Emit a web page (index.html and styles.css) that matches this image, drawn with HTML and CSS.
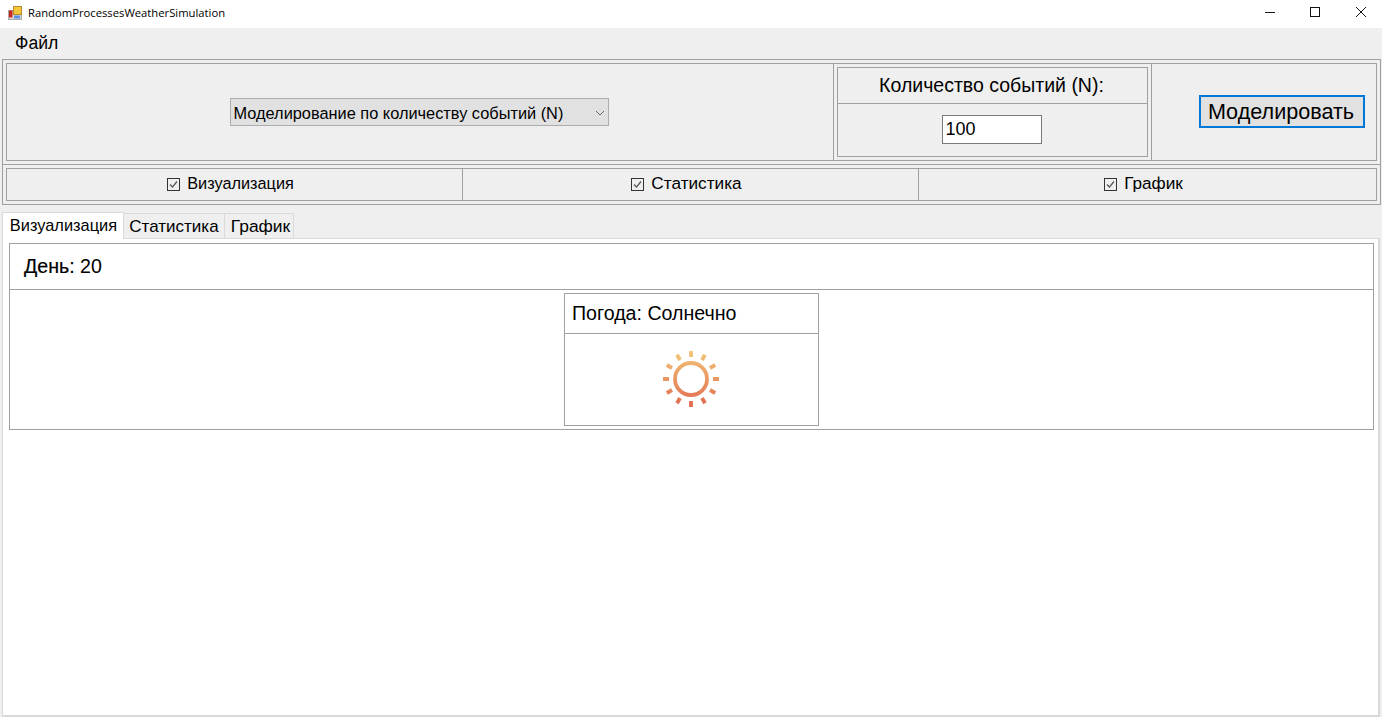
FILE: index.html
```html
<!DOCTYPE html>
<html lang="ru">
<head>
    <meta charset="UTF-8">
    <meta name="viewport" content="width=device-width, initial-scale=1.0">
    <title>RandomProcessesWeatherSimulation</title>
    <link rel="stylesheet" href="styles.css">
</head>
<body>

<div class="titlebar">
    <svg class="app-icon" width="14" height="14" viewBox="0 0 14 14">
        <rect x="0.5" y="4.5" width="13" height="9" fill="#dcdcdc" stroke="#a8a8a8"/>
        <rect x="5.5" y="0.5" width="8" height="8" fill="#f4c63c" stroke="#b98a2a"/>
        <rect x="1" y="4.5" width="3.5" height="7" fill="#c8281e"/>
        <rect x="6" y="9.5" width="6" height="3" fill="#5a90e0"/>
    </svg>
    <span class="app-title">RandomProcessesWeatherSimulation</span>
    <div class="win-buttons">
        <svg width="46" height="28" viewBox="0 0 46 28"><path d="M19 12.5h10" stroke="#111" fill="none"/></svg>
        <svg width="46" height="28" viewBox="0 0 46 28"><rect x="18.5" y="7.5" width="9" height="9" stroke="#111" fill="none"/></svg>
        <svg width="46" height="28" viewBox="0 0 46 28"><path d="M18 7l10 10M28 7l-10 10" stroke="#111" fill="none"/></svg>
    </div>
</div>

<div class="menubar"><span class="menu-item">Файл</span></div>

<div class="frame frame-top">
    <div class="cell cell-mode">
        <div class="combo">
            <span>Моделирование по количеству событий (N)</span>
            <svg width="10" height="6" viewBox="0 0 10 6"><path d="M1 1l4 4 4-4" stroke="#666" fill="none"/></svg>
        </div>
    </div>
    <div class="cell cell-count">
        <div class="count-box">
            <div class="count-label">Количество событий (N):</div>
            <div class="count-value"><input class="count-input" type="text" value="100"></div>
        </div>
    </div>
    <div class="cell cell-run">
        <button class="run-btn" type="button">Моделировать</button>
    </div>
</div>

<div class="frame frame-checks">
    <div class="cell check-cell check-first"><span class="check"><svg width="13" height="13" viewBox="0 0 13 13"><rect x="0.5" y="0.5" width="12" height="12" fill="none" stroke="#333"/><path d="M3 6.5l2.5 2.5L10 3.5" stroke="#555" fill="none" stroke-width="1.2"/></svg></span>Визуализация</div>
    <div class="cell check-cell check-second"><span class="check"><svg width="13" height="13" viewBox="0 0 13 13"><rect x="0.5" y="0.5" width="12" height="12" fill="none" stroke="#333"/><path d="M3 6.5l2.5 2.5L10 3.5" stroke="#555" fill="none" stroke-width="1.2"/></svg></span>Статистика</div>
    <div class="cell check-cell check-third"><span class="check"><svg width="13" height="13" viewBox="0 0 13 13"><rect x="0.5" y="0.5" width="12" height="12" fill="none" stroke="#333"/><path d="M3 6.5l2.5 2.5L10 3.5" stroke="#555" fill="none" stroke-width="1.2"/></svg></span>График</div>
</div>

<div class="tabs">
    <div class="tab tab-active">Визуализация</div>
    <div class="tab tab-stat">Статистика</div>
    <div class="tab tab-graph">График</div>
</div>

<div class="tab-panel">
    <div class="vis-table">
        <div class="day-row"><span class="day-label">День:</span> 20</div>
        <div class="weather-row">
            <div class="weather-box">
                <div class="weather-label">Погода: Солнечно</div>
                <div class="weather-icon">
                    <svg width="60" height="60" viewBox="0 0 60 60">
                        <defs>
                            <linearGradient id="sunGrad" gradientUnits="userSpaceOnUse" x1="0" y1="2" x2="0" y2="58">
                                <stop offset="0" stop-color="#f2c678"/>
                                <stop offset="1" stop-color="#e0694f"/>
                            </linearGradient>
                        </defs>
                        <g fill="none" stroke="url(#sunGrad)" stroke-width="3.8">
                            <circle cx="30" cy="30" r="16"/>
                            <path d="M30 2v6M30 52v6M2 30h6M52 30h6M16 5.8l3 5.2M41 49l3 5.2M5.8 16l5.2 3M49 41l5.2 3M44 5.8l-3 5.2M19 49l-3 5.2M54.2 16l-5.2 3M11 41l-5.2 3"/>
                        </g>
                    </svg>
                </div>
            </div>
        </div>
    </div>
</div>

</body>
</html>
```

FILE: styles.css
```css
html, body {
    margin: 0;
    height: 717px;
    overflow: hidden;
}
body {
    font-family: "Liberation Sans", Arial, sans-serif;
    font-size: 16px;
    color: #000;
    background-color: #efefef;
    display: flex;
    flex-direction: column;
}
.titlebar {
    height: 28px;
    background-color: #fff;
    display: flex;
    align-items: center;
    flex-shrink: 0;
}
.app-icon {
    margin-left: 8px;
    margin-top: -3px;
}
.app-title {
    margin-left: 6px;
    font-family: "Open Sans", sans-serif;
    font-size: 11.25px;
    margin-top: -3px;
}
.win-buttons {
    margin-left: auto;
    margin-right: -2px;
    display: flex;
}
.win-buttons svg {
    display: block;
}
.menubar {
    height: 31px;
    display: flex;
    align-items: center;
    flex-shrink: 0;
}
.menu-item {
    margin-left: 15px;
    margin-top: -1px;
    font-size: 17.6px;
}
.frame {
    margin: 0 1px 0 2px;
    border: 1px solid #a0a0a0;
    padding: 3px;
    display: flex;
    flex-shrink: 0;
}
.cell {
    border: 1px solid #a0a0a0;
    display: flex;
    align-items: center;
    justify-content: center;
    box-sizing: border-box;
}
.frame-top {
    height: 106px;
    box-sizing: border-box;
}
.cell-mode {
    width: 828px;
    padding-right: 2px;
}
.cell-count {
    width: 319px;
    margin-left: -1px;
    padding: 3px;
}
.cell-run {
    flex: 1;
    margin-left: -1px;
    padding-left: 47px;
    padding-right: 11px;
    padding-bottom: 1px;
}
.combo {
    width: 379px;
    height: 28px;
    box-sizing: border-box;
    border: 1px solid #adadad;
    background-color: #e1e1e1;
    display: flex;
    align-items: center;
    justify-content: space-between;
    padding: 2px 3px 0 3px;
    font-size: 16.35px;
}
.count-box {
    width: 100%;
    height: 100%;
    border: 1px solid #a0a0a0;
    box-sizing: border-box;
    display: flex;
    flex-direction: column;
}
.count-label {
    height: 35px;
    line-height: 35px;
    text-align: center;
    border-bottom: 1px solid #a0a0a0;
    font-size: 19.5px;
    padding-right: 2px;
}
.count-value {
    flex: 1;
    display: flex;
    align-items: center;
    justify-content: center;
}
.count-input {
    width: 100px;
    height: 29px;
    box-sizing: border-box;
    border: 1px solid #7a7a7a;
    margin: 0 2px 2px 0;
    padding: 1px 2px 0 3px;
    font-family: inherit;
    font-size: 18px;
    background-color: #fff;
    color: #000;
    outline: none;
}
.run-btn {
    width: 100%;
    height: 33px;
    box-sizing: border-box;
    border: 2px solid #0078d7;
    background-color: #e1e1e1;
    font-family: inherit;
    font-size: 21.6px;
    padding: 0 2px 0 0;
    color: #000;
}
.frame-checks {
    margin-top: -1px;
    height: 41px;
    box-sizing: border-box;
}
.check-cell {
    margin-left: -1px;
    padding-right: 8px;
    padding-bottom: 2px;
    font-size: 16.3px;
}
.check-first {
    width: 457px;
    margin-left: 0;
}
.check-second {
    width: 457px;
    font-size: 17.2px;
}
.check-third {
    flex: 1;
    font-size: 17.2px;
}
.check {
    display: inline-flex;
    margin: 1px 7px 0 0;
}
.tabs {
    margin: 5px 2px 0;
    height: 28px;
    display: flex;
    align-items: flex-end;
    flex-shrink: 0;
}
.tab {
    height: 25px;
    box-sizing: border-box;
    border: 1px solid #d9d9d9;
    border-bottom: none;
    line-height: 25px;
    text-align: center;
    background-color: #efefef;
    margin-left: -1px;
    font-size: 17px;
}
.tab-active {
    width: 122px;
    height: 27px;
    line-height: 25px;
    font-size: 16.4px;
    padding-left: 1px;
    background-color: #fff;
    margin-left: 0;
    margin-bottom: -1px;
    position: relative;
    z-index: 1;
}
.tab-stat {
    width: 102px;
}
.tab-graph {
    width: 70px;
    font-size: 17.4px;
    padding-left: 3px;
}
.tab-panel {
    margin: 0 2px;
    height: 479px;
    box-sizing: border-box;
    border: 1px solid #d9d9d9;
    border-width: 1px 2px 2px 1px;
    background-color: #fff;
    padding: 4px 4px 0 6px;
    flex-shrink: 0;
}
.vis-table {
    border: 1px solid #a0a0a0;
}
.day-row {
    height: 45px;
    line-height: 45px;
    padding-left: 14px;
    border-bottom: 1px solid #a0a0a0;
    font-size: 19.6px;
}
.day-label {
    -webkit-text-stroke: 0.2px #000;
}
.weather-row {
    display: flex;
    justify-content: center;
    padding: 3px 0;
}
.weather-box {
    width: 255px;
    height: 133px;
    box-sizing: border-box;
    border: 1px solid #a0a0a0;
    display: flex;
    flex-direction: column;
}
.weather-label {
    height: 39px;
    line-height: 39px;
    padding-left: 7px;
    border-bottom: 1px solid #a0a0a0;
    font-size: 19.6px;
}
.weather-icon {
    flex: 1;
    display: flex;
    align-items: center;
    justify-content: center;
}
.weather-icon svg {
    display: block;
    margin: -2px 2px 0 0;
}
```
